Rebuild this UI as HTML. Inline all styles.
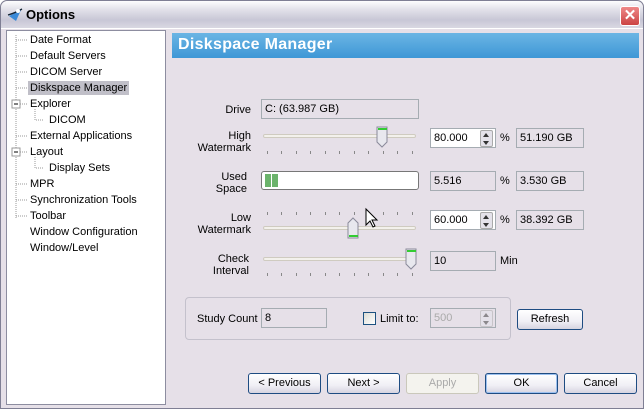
<!DOCTYPE html><html><head><style>
*{box-sizing:border-box}body{margin:0;width:644px;height:409px;overflow:hidden;font-family:"Liberation Sans",sans-serif;font-size:11px;color:#000}
.win{position:absolute;left:0;top:0;width:644px;height:409px;background:#e6e0e8;border:1px solid #7f7f94;border-radius:7px 7px 0 0}
.title{position:absolute;left:0;top:0;width:642px;height:28px;background:linear-gradient(#fdfdfe,#e3e2ea 30%,#c8c7d6 70%,#d9d8e2);border-radius:7px 7px 0 0;border-bottom:1px solid #fff}
.a{position:absolute}
.tree{position:absolute;left:5px;top:29px;width:160px;height:375px;background:#fff;border:1px solid #8d8da0}
.tree div{position:absolute;left:23px;font-size:11px;white-space:nowrap}
.hdr{position:absolute;left:171px;top:32px;width:467px;height:25px;background:linear-gradient(#6bb5e4,#3e97d6);color:#fff;font-weight:bold;font-size:16px;padding:3px 6px;letter-spacing:0.3px}
.fld{position:absolute;border:1px solid #a5acb2;background:#e6e0e8;padding:0 3px;height:20px;line-height:19px}
.wh{background:#fff}
.lbl{position:absolute;text-align:right;width:80px;line-height:12px}
.track{position:absolute;height:4px;border:1px solid #cfcbc0;background:#f3f1ec;border-radius:2px}
.btn{position:absolute;height:21px;border:1px solid #1e4c82;border-radius:3px;background:linear-gradient(#fff,#f0eff5 60%,#d6d4e0);text-align:center;line-height:19px}
.spin{position:absolute;width:13px;height:17px;border:1px solid #aaa;border-radius:2px;background:#e4e2ea}
.spin:before{content:"";position:absolute;left:2px;top:2px;border:3px solid transparent;border-bottom:4px solid #333;border-top:0}
.spin:after{content:"";position:absolute;left:2px;top:10px;border:3px solid transparent;border-top:4px solid #333;border-bottom:0}
</style></head><body><div class="win">
<div class="title">
<svg class="a" style="left:6px;top:6px" width="16" height="16" viewBox="0 0 16 16"><path d="M2 9 L14 3 L9 14 Z" fill="#3a8ad8"/><path d="M1 8 Q8 6 15 2" stroke="#123" stroke-width="1.3" fill="none"/><circle cx="11" cy="4" r="2" fill="#fff"/></svg>
<div class="a" style="left:25px;top:6px;font-weight:bold;font-size:13px">Options</div>
<div class="a" style="left:619px;top:5px;width:20px;height:20px;border:1px solid #fff;border-radius:3px;background:linear-gradient(#e88,#c44);color:#fff;font-size:15px;font-weight:bold;text-align:center;line-height:18px">✕</div>
</div>
<div class="tree">
<svg class="a" style="left:0;top:0" width="40" height="200"><g stroke="#999" stroke-dasharray="1 1" fill="none"><path d="M9 4V188M9 9H20M9 25H20M9 41H20M9 57H20M13 73H20M9 105H20M13 121H20M9 153H20M9 169H20M9 185H20M28 78V89H36M28 126V137H36"/></g><rect x="5" y="69" width="8" height="8" fill="#fff" stroke="#999"/><path d="M7 73H11" stroke="#000"/><rect x="5" y="117" width="8" height="8" fill="#fff" stroke="#999"/><path d="M7 121H11" stroke="#000"/></svg>
<div style="top:3px">Date Format</div><div style="top:19px">Default Servers</div><div style="top:35px">DICOM Server</div>
<div style="top:50px;left:21px;background:#c0bfc8;padding:1px 2px">Diskspace Manager</div>
<div style="top:67px">Explorer</div><div style="top:83px;left:42px">DICOM</div><div style="top:99px">External Applications</div>
<div style="top:115px">Layout</div><div style="top:131px;left:42px">Display Sets</div><div style="top:147px">MPR</div>
<div style="top:163px">Synchronization Tools</div><div style="top:179px">Toolbar</div><div style="top:195px">Window Configuration</div><div style="top:211px">Window/Level</div>
</div>
<div class="hdr">Diskspace Manager</div>
<div class="lbl" style="left:170px;top:103px">Drive</div>
<div class="fld" style="left:260px;top:98px;width:158px">C: (63.987 GB)</div>
<div class="lbl" style="left:170px;top:129px">High<br>Watermark</div>
<div class="track" style="left:262px;top:133px;width:153px"></div>
<div class="lbl" style="left:166px;top:170px">Used<br>Space</div>
<div class="a" style="left:260px;top:170px;width:158px;height:19px;border:1px solid #777;border-radius:3px;background:#fff"><div class="a" style="left:3px;top:2px;width:6px;height:13px;background:#6bb36b"></div><div class="a" style="left:10px;top:2px;width:6px;height:13px;background:#6bb36b"></div></div>
<div class="lbl" style="left:170px;top:211px">Low<br>Watermark</div>
<div class="track" style="left:262px;top:225px;width:153px"></div>
<div class="lbl" style="left:168px;top:252px">Check<br>Interval</div>
<div class="track" style="left:262px;top:256px;width:153px"></div>
<svg class="a" style="left:260px;top:120px" width="160" height="160"><g fill="#888">
<rect x="6" y="30" width="1" height="3"/><rect x="20" y="30" width="1" height="3"/><rect x="35" y="30" width="1" height="3"/><rect x="49" y="30" width="1" height="3"/><rect x="64" y="30" width="1" height="3"/><rect x="78" y="30" width="1" height="3"/><rect x="93" y="30" width="1" height="3"/><rect x="107" y="30" width="1" height="3"/><rect x="122" y="30" width="1" height="3"/><rect x="136" y="30" width="1" height="3"/><rect x="151" y="30" width="1" height="3"/>
<rect x="6" y="91" width="1" height="3"/><rect x="20" y="91" width="1" height="3"/><rect x="35" y="91" width="1" height="3"/><rect x="49" y="91" width="1" height="3"/><rect x="64" y="91" width="1" height="3"/><rect x="78" y="91" width="1" height="3"/><rect x="93" y="91" width="1" height="3"/><rect x="107" y="91" width="1" height="3"/><rect x="122" y="91" width="1" height="3"/><rect x="136" y="91" width="1" height="3"/><rect x="151" y="91" width="1" height="3"/>
<rect x="6" y="152" width="1" height="3"/><rect x="20" y="152" width="1" height="3"/><rect x="35" y="152" width="1" height="3"/><rect x="49" y="152" width="1" height="3"/><rect x="64" y="152" width="1" height="3"/><rect x="78" y="152" width="1" height="3"/><rect x="93" y="152" width="1" height="3"/><rect x="107" y="152" width="1" height="3"/><rect x="122" y="152" width="1" height="3"/><rect x="136" y="152" width="1" height="3"/><rect x="151" y="152" width="1" height="3"/></g>
<path d="M116 6H126V21L121 26L116 21Z" fill="#e8e8ee" stroke="#8a8a9a"/><rect x="117" y="7" width="9" height="2" fill="#3c3"/>
<path d="M87 117H97V102L92 97L87 102Z" fill="#e8e8ee" stroke="#8a8a9a"/><rect x="88" y="114" width="9" height="2" fill="#3c3"/>
<path d="M145 128H155V143L150 148L145 143Z" fill="#e8e8ee" stroke="#8a8a9a"/><rect x="146" y="129" width="9" height="2" fill="#3c3"/>
<path d="M105 88V104L109 100L112 106L114 105L111 99L116 99Z" fill="#fff" stroke="#000"/></svg>
<div class="fld wh" style="left:429px;top:127px;width:66px">80.000</div><div class="spin" style="left:479px;top:129px"></div>
<div class="a" style="left:499px;top:131px">%</div>
<div class="fld" style="left:515px;top:127px;width:68px">51.190 GB</div>
<div class="fld" style="left:429px;top:170px;width:66px">5.516</div>
<div class="a" style="left:499px;top:174px">%</div>
<div class="fld" style="left:515px;top:170px;width:68px">3.530 GB</div>
<div class="fld wh" style="left:429px;top:209px;width:66px">60.000</div><div class="spin" style="left:479px;top:211px"></div>
<div class="a" style="left:499px;top:213px">%</div>
<div class="fld" style="left:515px;top:209px;width:68px">38.392 GB</div>
<div class="fld" style="left:429px;top:250px;width:66px">10</div>
<div class="a" style="left:499px;top:254px">Min</div>
<div class="a" style="left:184px;top:296px;width:326px;height:43px;border:1px solid #c4c1cc;border-radius:4px"></div>
<div class="a" style="left:196px;top:312px">Study Count</div>
<div class="fld" style="left:260px;top:307px;width:66px">8</div>
<div class="a" style="left:362px;top:311px;width:13px;height:13px;border:1px solid #1c5180;background:linear-gradient(135deg,#dcdcd4,#fff)"></div>
<div class="a" style="left:379px;top:312px">Limit to:</div>
<div class="fld" style="left:429px;top:307px;width:66px;color:#aaa">500</div><div class="spin" style="left:479px;top:309px;opacity:.5"></div>
<div class="btn" style="left:516px;top:308px;width:66px">Refresh</div>
<div class="btn" style="left:247px;top:372px;width:73px">&lt; Previous</div>
<div class="btn" style="left:326px;top:372px;width:73px">Next &gt;</div>
<div class="btn" style="left:405px;top:372px;width:73px;border-color:#cac8bb;background:#f4f3ee;color:#aaa">Apply</div>
<div class="btn" style="left:484px;top:372px;width:73px;box-shadow:inset 0 0 0 1px #9cc0ef">OK</div>
<div class="btn" style="left:563px;top:372px;width:73px">Cancel</div>
</div></body></html>
